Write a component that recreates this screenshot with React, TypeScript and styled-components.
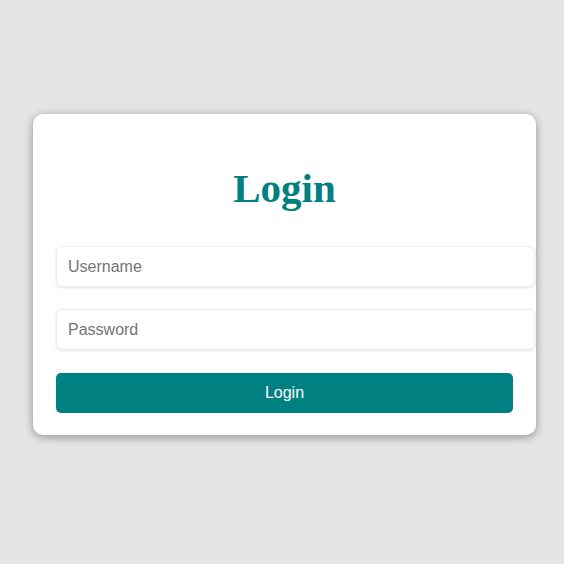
import React from "react";
import styled, { createGlobalStyle } from "styled-components";

const Global = createGlobalStyle`
  html, body { margin: 0; padding: 0; background: #e5e5e5; }
  body { font-family: "Liberation Sans", Arial, sans-serif; }
  * { box-sizing: border-box; }
`;

const Page = styled.div`
  min-height: 564px;
  display: flex;
  justify-content: center;
  align-items: flex-start;
  padding: 114px 0 0 5px;
`;

const Card = styled.form`
  width: 503px;
  background: #ffffff;
  border-radius: 10px;
  box-shadow: 0 2px 10px rgba(0, 0, 0, 0.38);
  padding: 23px 23px 22px;
  display: flex;
  flex-direction: column;
`;

const Title = styled.h2`
  margin: 28px 0 35px;
  font-family: "Liberation Serif", "Times New Roman", serif;
  font-weight: bold;
  font-size: 41px;
  line-height: 46px;
  color: #008080;
  text-align: center;
`;

const Input = styled.input`
  box-sizing: content-box;
  width: 100%;
  height: 19px;
  margin: 0 0 22px;
  padding: 10px 9px 10px 11px;
  border: 1px solid #ececec;
  border-radius: 6px;
  box-shadow: 0 1px 3px rgba(0, 0, 0, 0.1);
  font-family: "Liberation Sans", Arial, sans-serif;
  font-size: 16px;
  color: #333;
  outline: none;
  &::placeholder { color: #757575; }
`;

const Button = styled.button`
  margin-top: 1px;
  height: 40px;
  width: 100%;
  border: none;
  border-radius: 5px;
  background: #008080;
  color: #ffffff;
  font-family: "Liberation Sans", Arial, sans-serif;
  font-size: 16px;
  cursor: pointer;
`;

export default function App() {
  return (
    <>
      <Global />
      <Page>
        <Card onSubmit={(e) => e.preventDefault()}>
          <Title>Login</Title>
          <Input type="text" placeholder="Username" />
          <Input type="password" placeholder="Password" />
          <Button type="submit">Login</Button>
        </Card>
      </Page>
    </>
  );
}
